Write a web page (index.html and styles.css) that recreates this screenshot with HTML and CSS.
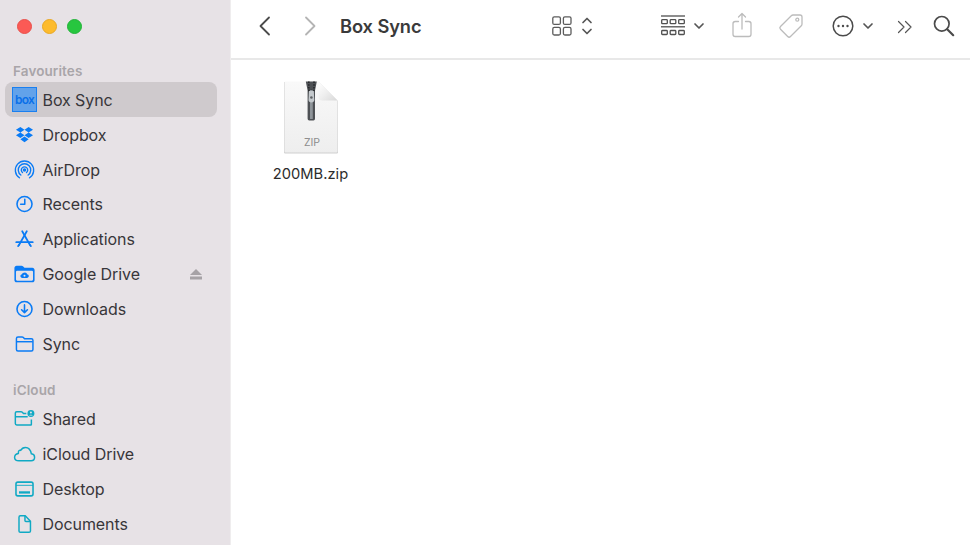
FILE: index.html
```html
<!DOCTYPE html>
<html lang="en">
<head>
<meta charset="utf-8">
<title>Box Sync</title>
<link rel="stylesheet" href="styles.css">
</head>
<body>
<div class="window">
  <aside class="sidebar">
    <div class="lights">
      <span class="light red"></span><span class="light yellow"></span><span class="light green"></span>
    </div>
    <div class="heading">Favourites</div>
    <ul class="list">
      <li class="row selected">
        <span class="box-icon">box</span>
        <span class="label">Box Sync</span>
      </li>
      <li class="row">
        <svg class="ico" viewBox="0 0 24 24"><path fill="#0a7bf5" d="M7.500 3.400 12 6.400 7.500 9.400 2.700 6.400zM16.500 3.400 21.300 6.400l-4.800 3L12 6.400zM2.700 12.400l4.800-3 4.500 3-4.500 3zM16.500 9.400l4.800 3-4.800 3-4.500-3zM7.500 16.500l4.500-3 4.500 3-4.500 3.300z"/></svg>
        <span class="label">Dropbox</span>
      </li>
      <li class="row">
        <svg class="ico" viewBox="0 0 24 24" fill="none" stroke="#0a7bf5" stroke-width="1.500" stroke-linecap="round"><path d="M6.500 20.500a10 10 0 1 1 11 0"/><path d="M8 17.500a6.800 6.800 0 1 1 8 0"/><path d="M9.800 14.800a3.500 3.500 0 1 1 4.400 0"/><circle cx="12" cy="12" r="1.200" fill="#0a7bf5"/></svg>
        <span class="label">AirDrop</span>
      </li>
      <li class="row">
        <svg class="ico" viewBox="0 0 24 24" fill="none" stroke="#0a7bf5" stroke-width="1.700" stroke-linecap="round" stroke-linejoin="round"><circle cx="12" cy="12" r="8.200"/><path d="M12.300 6.800v5.500H7.800"/></svg>
        <span class="label">Recents</span>
      </li>
      <li class="row">
        <svg class="ico" viewBox="0 0 24 24" fill="none" stroke="#0a7bf5" stroke-width="1.900" stroke-linecap="round"><path d="M14.500 3.500 6 18.500"/><path d="M9.500 3.500 18 18.500"/><path d="M3 15.500h18"/><path d="M5 19.800l1-1.300M19 19.800l-1-1.300"/></svg>
        <span class="label">Applications</span>
      </li>
      <li class="row">
        <svg class="ico wide" viewBox="0 0 24 24"><path fill="#0a7bf5" d="M1 5.500C1 4.100 2 3 3.400 3h5.300c.8 0 1.300.3 1.900.9L12 5.200h8.600C22 5.200 23 6.300 23 7.700v11c0 1.400-1 2.300-2.400 2.300H3.400C2 21 1 20.100 1 18.700z"/><rect x="2.700" y="8.500" width="18.600" height="10.800" rx="1.200" fill="#e7e2e6"/><path fill="#0a7bf5" d="M12.500 10.300c1.300 0 2.100.9 2.300 2 1.100.1 1.900.9 1.900 2 0 1.100-.9 2-2 2H9.600c-1.200 0-2.100-.9-2.100-2 0-1 .7-1.800 1.700-2 .3-1.100 1.600-2 3.300-2z"/><circle cx="12" cy="14" r="1.100" fill="#e7e2e6"/></svg>
        <span class="label">Google Drive</span>
        <svg class="eject" viewBox="0 0 12 11"><path fill="#a6a2a6" d="M6 0l6 6H0z"/><rect y="7.500" width="12" height="3" fill="#a6a2a6"/></svg>
      </li>
      <li class="row">
        <svg class="ico" viewBox="0 0 24 24" fill="none" stroke="#0a7bf5" stroke-width="1.700" stroke-linecap="round" stroke-linejoin="round"><circle cx="12" cy="12" r="8.200"/><path d="M12 7.500v8.500M8.800 12.800l3.200 3.200 3.200-3.200"/></svg>
        <span class="label">Downloads</span>
      </li>
      <li class="row">
        <svg class="ico" viewBox="0 0 24 24" fill="none" stroke="#0a7bf5" stroke-width="1.600" stroke-linejoin="round"><path d="M3.200 7V6c0-1 .7-1.700 1.700-1.700h4.400c.7 0 1.100.3 1.500.7l1.200 1.300h7.500c1 0 1.700.7 1.700 1.700v10c0 1-.7 1.700-1.700 1.700H4.900c-1 0-1.700-.7-1.700-1.700z"/><path d="M3.200 9.500h17.600"/></svg>
        <span class="label">Sync</span>
      </li>
    </ul>
    <div class="heading second">iCloud</div>
    <ul class="list">
      <li class="row">
        <svg class="ico wide" viewBox="0 0 24 24" fill="none" stroke="#10a9c4" stroke-width="1.600" stroke-linejoin="round"><path d="M16 18.500H3.500c-.9 0-1.500-.6-1.500-1.500V5.500C2 4.600 2.600 4 3.500 4h4.700c.6 0 1 .2 1.400.6l1.300 1.400H14M2 9.500h13.500M19.500 12.500V18c0 .3-.2.500-.5.500h-3"/><circle cx="19" cy="6" r="3.800" fill="#10a9c4" stroke="none"/><circle cx="19" cy="5" r="1.100" fill="#e7e2e6" stroke="none"/><path d="M17 8.300c.4-1.200 3.600-1.200 4 0z" fill="#e7e2e6" stroke="none"/></svg>
        <span class="label">Shared</span>
      </li>
      <li class="row">
        <svg class="ico wide" viewBox="0 0 24 24" fill="none" stroke="#10a9c4" stroke-width="1.600" stroke-linejoin="round"><path d="M6 19.300h13.200c2 0 3.800-1.500 3.800-3.800 0-2.200-1.600-3.500-3.500-3.700C18.800 8 16.500 4.800 13 4.800c-2.500 0-4.200 1.400-5.200 3.300-.8-.4-2-.1-2.400 1.500 0 .4-.1 1.600-.1 1.800C3 11.800 1.200 13.500 1.200 15.700c0 2 1.800 3.600 4.800 3.600z"/></svg>
        <span class="label">iCloud Drive</span>
      </li>
      <li class="row">
        <svg class="ico" viewBox="0 0 24 24" fill="none" stroke="#10a9c4" stroke-width="1.700"><rect x="2.700" y="4.500" width="18.600" height="15" rx="2"/><path d="M2.700 8h18.600" stroke-width="1"/><rect x="6" y="14.500" width="12" height="2.500" fill="#10a9c4" stroke="none"/></svg>
        <span class="label">Desktop</span>
      </li>
      <li class="row">
        <svg class="ico" viewBox="0 0 24 24" fill="none" stroke="#10a9c4" stroke-width="1.600" stroke-linejoin="round"><path d="M6 4.500c0-1 .6-1.500 1.500-1.500h5.300l5.700 6v10.500c0 1-.6 1.500-1.500 1.500h-9.500C6.600 21 6 20.500 6 19.500z"/><path d="M12.500 3v5.200c0 .7.400 1.100 1 1.100h5"/></svg>
        <span class="label">Documents</span>
      </li>
    </ul>
  </aside>
  <main class="content">
    <header class="toolbar">
      <svg class="tb back" viewBox="0 0 16 24" fill="none" stroke="#4b4b4b" stroke-width="1.800" stroke-linecap="round" stroke-linejoin="round"><path d="M12 3.500 3.500 12l8.500 8.500"/></svg>
      <svg class="tb forward" viewBox="0 0 16 24" fill="none" stroke="#b4b4b4" stroke-width="1.800" stroke-linecap="round" stroke-linejoin="round"><path d="M4 3.500 12.500 12 4 20.500"/></svg>
      <h1 class="title">Box Sync</h1>
      <svg class="tb grid" viewBox="0 0 20 20" fill="none" stroke="#5c5c5c" stroke-width="1.300"><rect x=".8" y=".8" width="7.600" height="7.600" rx="1.500"/><rect x="11.400" y=".8" width="7.600" height="7.600" rx="1.500"/><rect x=".8" y="11.400" width="7.600" height="7.600" rx="1.500"/><rect x="11.400" y="11.400" width="7.600" height="7.600" rx="1.500"/></svg>
      <svg class="tb updown" viewBox="0 0 12 20" fill="none" stroke="#555" stroke-width="1.700" stroke-linecap="round" stroke-linejoin="round"><path d="M2 6.500 6 2.500l4 4M2 13.500l4 4 4-4"/></svg>
      <svg class="tb group" viewBox="0 0 24 21" fill="none" stroke="#505050"><path d="M0 1h24" stroke-width="1.300"/><rect x=".7" y="4.700" width="5.600" height="4" rx=".8" stroke-width="1.300"/><rect x="9.200" y="4.700" width="5.600" height="4" rx=".8" stroke-width="1.300"/><rect x="17.700" y="4.700" width="5.600" height="4" rx=".8" stroke-width="1.300"/><path d="M0 11.800h24" stroke-width="1.300"/><rect x=".7" y="15.500" width="5.600" height="4" rx=".8" stroke-width="1.300"/><rect x="9.200" y="15.500" width="5.600" height="4" rx=".8" stroke-width="1.300"/><rect x="17.700" y="15.500" width="5.600" height="4" rx=".8" stroke-width="1.300"/></svg>
      <svg class="tb chev c1" viewBox="0 0 12 8" fill="none" stroke="#555" stroke-width="1.700" stroke-linecap="round" stroke-linejoin="round"><path d="M2 2l4 4 4-4"/></svg>
      <svg class="tb share" viewBox="0 0 20 26" fill="none" stroke="#bcbcbc" stroke-width="1.300" stroke-linecap="round" stroke-linejoin="round"><path d="M6.500 9.500H3.200C2 9.500 1 10.300 1 11.700v10.600C1 23.700 2 24.500 3.200 24.500h13.600c1.200 0 2.200-.8 2.200-2.200V11.700c0-1.400-1-2.200-2.200-2.200h-3.300"/><path d="M10 17V1.500M6.500 5 10 1.500 13.500 5"/></svg>
      <svg class="tb tag" viewBox="0 0 26 26" fill="none" stroke="#bcbcbc" stroke-width="1.300" stroke-linejoin="round"><path d="M15 2h7c1.200 0 2 .8 2 2v7c0 .7-.2 1.200-.7 1.700L12.500 23.500c-.8.800-2 .8-2.800 0L2.500 16.300c-.8-.8-.8-2 0-2.800L13.300 2.700C13.800 2.200 14.300 2 15 2z"/><circle cx="19.300" cy="6.700" r="1.500"/></svg>
      <svg class="tb more" viewBox="0 0 22 22" fill="none" stroke="#4b4b4b" stroke-width="1.500"><circle cx="11" cy="11" r="9.800"/><circle cx="6.500" cy="11" r="1.200" fill="#4b4b4b" stroke="none"/><circle cx="11" cy="11" r="1.200" fill="#4b4b4b" stroke="none"/><circle cx="15.500" cy="11" r="1.200" fill="#4b4b4b" stroke="none"/></svg>
      <svg class="tb chev c2" viewBox="0 0 12 8" fill="none" stroke="#555" stroke-width="1.700" stroke-linecap="round" stroke-linejoin="round"><path d="M2 2l4 4 4-4"/></svg>
      <svg class="tb dbl" viewBox="0 0 16 14" fill="none" stroke="#555" stroke-width="1.200" stroke-linecap="round" stroke-linejoin="round"><path d="M1.500 1.500 7 7l-5.500 5.500M8.500 1.500 14 7l-5.500 5.500"/></svg>
      <svg class="tb search" viewBox="0 0 22 22" fill="none" stroke="#4b4b4b" stroke-width="1.700" stroke-linecap="round"><circle cx="8.800" cy="8.800" r="7.300"/><path d="M14.200 14.200l6 6" stroke-width="2.200"/></svg>
    </header>
    <section class="files">
      <figure class="file">
        <svg class="zip" viewBox="0 0 56 74">
          <defs>
            <linearGradient id="page" x1="0" y1="0" x2="0" y2="1"><stop offset="0" stop-color="#f9f9f9"/><stop offset="1" stop-color="#eeeeee"/></linearGradient>
            <linearGradient id="fold" x1="0" y1="0" x2="1" y2="1"><stop offset="0" stop-color="#fff"/><stop offset=".5" stop-color="#eee"/><stop offset="1" stop-color="#d8d8d8"/></linearGradient>
          </defs>
          <path fill="#cfcfcf" d="M1 2h35l19 19v51c0 1-.6 1.600-1.600 1.600H2.600C1.600 73.600 1 73 1 72z"/>
          <path fill="url(#page)" d="M2.500 1.500h33l19 19V71c0 1-.6 1.600-1.600 1.600H3.100c-1 0-1.600-.6-1.600-1.600V2.500c0-.6.400-1 1-1z"/>
          <path fill="url(#fold)" d="M35.500 1.500l19 19H39c-2.200 0-3.500-1.300-3.500-3.500z"/>
          <path d="M22.800 1.500h11l-1.800 9v28c0 1-.6 2-1.500 2h-4.200c-1 0-1.700-1-1.700-2v-28z" fill="#4e5155"/>
          <path d="M25.800 1.500v9h5.200v-9" fill="none" stroke="#26282b" stroke-width="1.600" stroke-dasharray="1.500 1.200"/>
          <path d="M27 10h2.800v29H27z" fill="#8f959a"/>
          <path d="M26 11h4.800l.5 9c0 1.500-1.300 2.500-2.900 2.500s-2.900-1-2.900-2.500z" fill="#c4c9cd"/>
          <circle cx="28.400" cy="17.500" r="1.300" fill="#5d6165"/>
          <text class="zip-text" x="29" y="65.500" text-anchor="middle">ZIP</text>
        </svg>
        <figcaption class="filename">200MB.zip</figcaption>
      </figure>
    </section>
  </main>
</div>
</body>
</html>
```

FILE: styles.css
```css
* { box-sizing: border-box; }
html, body { margin: 0; height: 100%; }
body { font-family: Inter, "Liberation Sans", sans-serif; overflow: hidden; background: #fff; }
.window { display: flex; width: 970px; height: 545px; overflow: hidden; }

.sidebar { flex: none; width: 231px; height: 545px; overflow: hidden; background: #e7e2e6; border-right: 1px solid #efedee; padding: 18px 13px 0 5px; }
.lights { display: flex; gap: 10px; padding-left: 12px; height: 16px; }
.light { width: 15px; height: 15px; border-radius: 50%; position: relative; top: 1px; }
.red { background: #fb5a55; border: 1px solid #e9504b; }
.yellow { background: #fdbb2d; border: 1px solid #e9a823; }
.green { background: #27c63f; border: 1px solid #22b338; }

.heading { margin: 29px 0 0 8px; height: 16px; font-size: 13.500px; line-height: 16px; font-weight: 600; color: #a9a5a9; letter-spacing: .1px; }
.heading.second { margin-top: 21px; }
.list { list-style: none; margin: 3.300px 0 0; padding: 0; }
.row { display: flex; align-items: center; height: 34.900px; padding-left: 7px; border-radius: 8px; color: #38363a; }
.row.selected { background: #cfcacd; }
.label { font-size: 16px; line-height: 20px; letter-spacing: -.08px; margin-left: 5.500px; }
.ico { flex: none; width: 25px; height: 22px; padding: 0 1px; }
.ico.wide { padding: 0; }

.box-icon { flex: none; width: 25px; height: 25px; background: #62a2ea; border: 1px solid #1a7ff0; color: #0a6fe8; font-size: 12px; font-weight: 600; line-height: 23px; text-align: center; letter-spacing: -.8px; }
.eject { flex: none; width: 12px; height: 11px; margin-left: auto; margin-right: 15px; }

.content { flex: 1; min-width: 0; display: flex; flex-direction: column; }
.toolbar { flex: none; position: relative; height: 60px; border-bottom: 2px solid #e8e8e8; background: #fff; }
.tb { position: absolute; }
.back { left: 26px; top: 14px; width: 16px; height: 24px; }
.forward { left: 71px; top: 14px; width: 16px; height: 24px; }
.title { position: absolute; left: 109px; top: 14px; margin: 0; font-size: 18.300px; line-height: 24px; font-weight: 600; color: #3a3a3a; letter-spacing: -.1px; }
.grid { left: 321px; top: 16px; width: 20px; height: 20px; }
.updown { left: 350px; top: 16px; width: 12px; height: 20px; }
.group { left: 430px; top: 15px; width: 24px; height: 21px; }
.chev { width: 12px; height: 8px; }
.c1 { left: 462px; top: 22px; }
.c2 { left: 631px; top: 22px; }
.share { left: 501px; top: 12px; width: 20px; height: 26px; }
.tag { left: 547px; top: 13px; width: 26px; height: 26px; }
.more { left: 601px; top: 15px; width: 22px; height: 22px; }
.dbl { left: 666px; top: 20px; width: 16px; height: 14px; }
.search { left: 702px; top: 15px; width: 22px; height: 22px; }

.files { flex: 1; padding: 20px 0 0 40px; background: #fff; }
.file { margin: 0 0 0 1px; width: 78px; display: flex; flex-direction: column; align-items: center; }
.zip { width: 56px; height: 74px; display: block; }
.zip-text { font-family: Inter, "Liberation Sans", sans-serif; font-size: 10.500px; fill: #8d8d8d; }
.filename { margin-top: 10px; margin-right: 1px; font-size: 14.700px; line-height: 20px; color: #2c2c2c; white-space: nowrap; }
```
